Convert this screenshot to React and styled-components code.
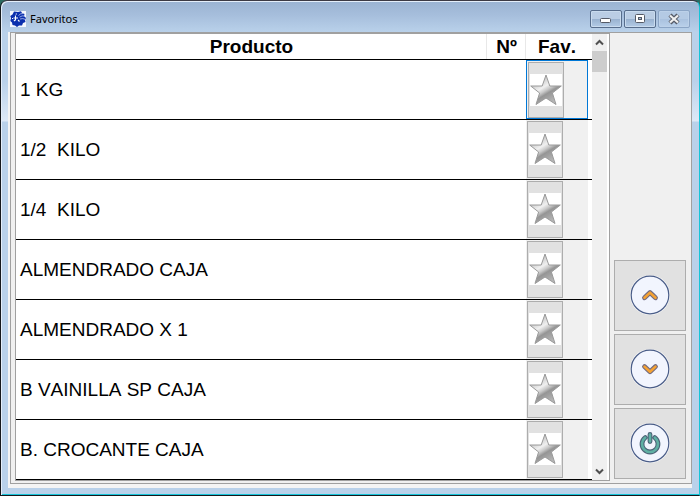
import React, { useState } from 'react'
import styled, { createGlobalStyle } from 'styled-components'

const GlobalStyle = createGlobalStyle`
  *, *::before, *::after {
    box-sizing: border-box;
  }

  html, body, #root {
    height: 100%;
  }

  body {
    margin: 0;
    background: #2b6b62;
    font-family: "Liberation Sans", Arial, sans-serif;
    font-kerning: none;
    color: #000;
  }
`

const Window = styled.main`
  display: flex;
  flex-direction: column;
  height: 100%;
  min-height: 300px;
  padding: 0 7px;
  border: 1px solid #15181c;
  border-top-color: #3c3a44;
  border-right-color: #15c4d8;
  border-radius: 7px 7px 0 0;
  background: linear-gradient(
    #9ab3d2 0,
    #a6bedc 14px,
    #b9d1ea 31px,
    #b9d1ea 80px,
    #dde9f7 120px,
    #b9d1ea 121px
  );
  box-shadow: inset 1px 1px 0 #e4eefa, inset 0 -1px 0 #15c4d8;
`

const TitleBar = styled.header`
  display: flex;
  flex: none;
  align-items: center;
  height: 31px;
  padding: 5px 2px 0;
`

const Title = styled.h1`
  flex: 1;
  margin: 0 0 0 4px;
  font: 400 11px/16px "Noto Sans", "Segoe UI", sans-serif;
`

const CaptionButtons = styled.div`
  display: flex;
  gap: 2px;
`

const CaptionButton = styled.button`
  display: flex;
  align-items: center;
  justify-content: center;
  width: 32px;
  height: 18px;
  margin: 0;
  padding: 0;
  border: 1px solid ${p => (p.$soft ? '#8ba5c6' : '#576d8c')};
  border-radius: 2px;
  background: ${p =>
    p.$soft
      ? 'linear-gradient(#b4cae4 50%, #a9c1de 50%, #b9d0ea)'
      : 'linear-gradient(#bacde4 50%, #98b1cf 50%, #b3cbe6)'};
  box-shadow: inset 0 0 0 1px ${p => (p.$soft ? '#bcd1e9' : '#c9dbee')};
`

const Client = styled.div`
  display: flex;
  flex: 1;
  min-height: 0;
  margin-bottom: 7px;
  padding: 0 0 4px 2px;
  background: #f4f4f4;
`

const Body = styled.div`
  display: flex;
  flex: 1;
  min-width: 0;
  border: 1px solid #a0a0a0;
  background: #f0f0f0;
`

const ListFrame = styled.section`
  display: flex;
  flex: 1;
  min-width: 0;
  margin: 0 0 2px 4px;
  padding-right: 2px;
  border: 1px solid #a0a0a0;
  background: #fff;
`

const ListView = styled.div`
  flex: 1;
  min-width: 0;
  overflow: hidden;
`

const Table = styled.table`
  width: 100%;
  table-layout: fixed;
  border-collapse: separate;
  border-spacing: 0;
`

const HeadCell = styled.th`
  width: ${p => p.$width || 'auto'};
  height: 26px;
  padding: 0 ${p => (p.$last ? '4px' : '0')} 0 0;
  border-bottom: 1px solid #000;
  box-shadow: ${p => (p.$last ? 'none' : 'inset -1px 0 0 #e8e8e8')};
  font-size: 19px;
  line-height: 24px;
  font-weight: 700;
`

const Cell = styled.td`
  height: 60px;
  padding: 0 4px;
  border-bottom: 1px solid #000;
  font-size: 19px;
  line-height: 24px;
  white-space: pre;
`

const FavCell = styled(Cell)`
  padding: 0 4px 0 0;
`

const FavSlot = styled.div`
  height: 59px;
  padding: 1px 1px 0;
  border: ${p => (p.$current ? '1px solid #0078d7' : 'none')};
  background: #f0f0f0;
`

const FavButton = styled.button`
  display: flex;
  align-items: flex-start;
  justify-content: center;
  width: 36px;
  height: ${p => (p.$current ? '56px' : '57px')};
  margin: 0;
  padding: 11px 0 0;
  border: 1px solid #adadad;
  background: #e1e1e1;
`

const ScrollBar = styled.div`
  display: flex;
  flex: none;
  flex-direction: column;
  width: 15px;
  background: #f0f0f0;
`

const ScrollButton = styled.button`
  display: flex;
  align-items: center;
  justify-content: center;
  height: 17px;
  margin: 0;
  padding: 0;
  border: 0;
  background: #f0f0f0;
`

const ScrollTrack = styled.div`
  flex: 1;
`

const ScrollThumb = styled.div`
  height: 21px;
  background: #cdcdcd;
`

const Actions = styled.nav`
  display: flex;
  flex: none;
  flex-direction: column;
  justify-content: flex-end;
  gap: 3px;
  padding: 0 5px 4px 4px;
`

const ActionButton = styled.button`
  display: flex;
  align-items: center;
  justify-content: center;
  width: 72px;
  height: 71px;
  margin: 0;
  padding: 0 0 2px;
  border: 1px solid #adadad;
  background: #e1e1e1;
`

const AppIcon = () => (
  <svg width="16" height="16" viewBox="0 0 16 16" aria-hidden="true">
    <rect width="16" height="16" fill="#f4f7fd" />
    <path
      d="M4 .5 8 1 11 .2 12 2 14.500 3 14 5 16 7 15 9 15.500 11 13 12 12 14.500 9 14.500 7 16 5 14.500 2.500 14 2 11.500 .3 10 1 7 .2 5 2.500 3.500z"
      fill="#0b2fae"
    />
    <path d="M8.500 4.500q2-2.500 5-2M9.500 6.200q2.500-2 5.500-1.200M10 8q3-1 5 .3" fill="none" stroke="#b9c8ef" strokeWidth="0.8" />
    <path d="M5.500 4.500v5M3.500 7h4.500M4 10l1-1M8 9l1.500 1.500M2 7.500h1M6 3.500l.5-1" stroke="#fff" strokeWidth="1.100" />
  </svg>
)

const Star = () => (
  <svg width="32" height="32" viewBox="0 0 32 32" aria-hidden="true">
    <defs>
      <linearGradient id="silver" x1="0.2" y1="0.15" x2="0.7" y2="0.95">
        <stop offset="0" stopColor="#bcbcbc" />
        <stop offset="0.36" stopColor="#f0f0f0" />
        <stop offset="0.5" stopColor="#c8c8c8" />
        <stop offset="0.62" stopColor="#959595" />
        <stop offset="1" stopColor="#b8b8b8" />
      </linearGradient>
    </defs>
    <rect width="32" height="32" fill="#fff" />
    <path
      d="M16 1 19.800 12H31.300L22.400 19 26 30.500 16 24 6 30.500 9.600 19 .7 12H12.200z"
      fill="url(#silver)"
      stroke="#9a9a9a"
      strokeLinejoin="round"
    />
  </svg>
)

const GLYPHS = {
  up: { d: 'M14.500 22.800 20 17.600 25.500 22.800', color: '#f5a233', edge: '#716a80' },
  down: { d: 'M14.500 17.600 20 22.800 25.500 17.600', color: '#f5a233', edge: '#716a80' },
  power: { d: 'M20 11.500V18.500M15.200 14.600A8 8 0 1 0 24.800 14.600', color: '#5fb0a4', edge: '#4c6478' }
}

const RoundIcon = ({ name }) => {
  const { d, color, edge } = GLYPHS[name]
  return (
    <svg width="40" height="40" viewBox="0 0 40 40" aria-hidden="true">
      <circle cx="20" cy="20" r="20" fill="#f6f6f6" />
      <circle cx="20" cy="20" r="18.800" fill="#f2f5fe" stroke="#4a5d88" strokeWidth="1.200" />
      <g fill="none" strokeLinecap="round" strokeLinejoin="round">
        <path d={d} stroke={edge} strokeWidth="4.800" />
        <path d={d} stroke={color} strokeWidth="2.600" />
      </g>
    </svg>
  )
}

const Chevron = ({ down }) => (
  <svg width="9" height="7" viewBox="0 0 9 7" aria-hidden="true">
    <path d={down ? 'M1 1.500 4.500 5 8 1.500' : 'M1 5.500 4.500 2 8 5.500'} fill="none" stroke="#505050" strokeWidth="2" />
  </svg>
)

const products = [
  '1 KG',
  '1/2  KILO',
  '1/4  KILO',
  'ALMENDRADO CAJA',
  'ALMENDRADO X 1',
  'B VAINILLA SP CAJA',
  'B. CROCANTE CAJA'
]

const App = () => {
  const [current, setCurrent] = useState(0)
  const move = step =>
    setCurrent(prev => Math.min(products.length - 1, Math.max(0, prev + step)))

  return (
    <>
      <GlobalStyle />
      <Window>
        <TitleBar>
          <AppIcon />
          <Title>Favoritos</Title>
          <CaptionButtons>
            <CaptionButton type="button" aria-label="Minimizar">
              <svg width="12" height="12" viewBox="0 0 12 12">
                <rect x="0.500" y="5.500" width="10" height="4" rx="1" fill="#fff" stroke="#555a66" />
              </svg>
            </CaptionButton>
            <CaptionButton type="button" aria-label="Maximizar">
              <svg width="12" height="12" viewBox="0 0 12 12">
                <rect x="1.500" y="1.500" width="9" height="8" rx="1" fill="#fff" stroke="#555a66" />
                <rect x="4.500" y="4.500" width="3" height="2" fill="#a8bedb" stroke="#555a66" />
              </svg>
            </CaptionButton>
            <CaptionButton type="button" aria-label="Cerrar" $soft>
              <svg width="12" height="12" viewBox="0 0 12 12">
                <path d="M2 2 10 10M10 2 2 10" stroke="#555a66" strokeWidth="4.400" />
                <path d="M2 2.500 10 9.500M10 2.500 2 9.500" stroke="#f0f0f0" strokeWidth="2.200" />
              </svg>
            </CaptionButton>
          </CaptionButtons>
        </TitleBar>
        <Client>
          <Body>
            <ListFrame>
              <ListView>
                <Table>
                  <thead>
                    <tr>
                      <HeadCell>Producto</HeadCell>
                      <HeadCell $width="39px">Nº</HeadCell>
                      <HeadCell $width="66px" $last>Fav.</HeadCell>
                    </tr>
                  </thead>
                  <tbody>
                    {products.map((name, i) => (
                      <tr key={name} onClick={() => setCurrent(i)}>
                        <Cell>{name}</Cell>
                        <Cell />
                        <FavCell>
                          <FavSlot $current={i === current}>
                            <FavButton type="button" aria-label={`Favorito ${name}`} $current={i === current}>
                              <Star />
                            </FavButton>
                          </FavSlot>
                        </FavCell>
                      </tr>
                    ))}
                  </tbody>
                </Table>
              </ListView>
              <ScrollBar>
                <ScrollButton type="button" aria-label="Desplazar arriba">
                  <Chevron />
                </ScrollButton>
                <ScrollTrack>
                  <ScrollThumb />
                </ScrollTrack>
                <ScrollButton type="button" aria-label="Desplazar abajo">
                  <Chevron down />
                </ScrollButton>
              </ScrollBar>
            </ListFrame>
            <Actions>
              <ActionButton type="button" aria-label="Subir" onClick={() => move(-1)}>
                <RoundIcon name="up" />
              </ActionButton>
              <ActionButton type="button" aria-label="Bajar" onClick={() => move(1)}>
                <RoundIcon name="down" />
              </ActionButton>
              <ActionButton type="button" aria-label="Salir">
                <RoundIcon name="power" />
              </ActionButton>
            </Actions>
          </Body>
        </Client>
      </Window>
    </>
  )
}

export default App
